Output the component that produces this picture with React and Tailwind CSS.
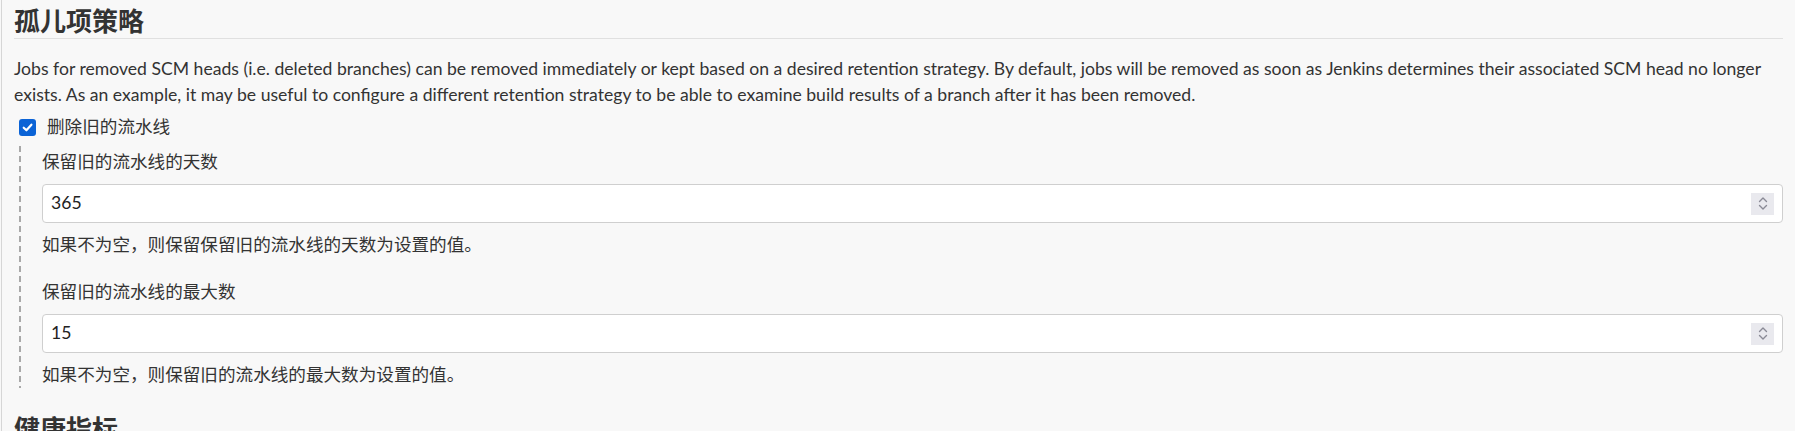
import React from "react";

const font = { fontFamily: '"Lato", "Noto Sans CJK SC", sans-serif' };

function Spinner() {
  return (
    <div className="flex h-[22px] w-[23px] flex-col items-center justify-center bg-[#e9e9ee]">
      <svg width="12" height="17" viewBox="0 0 12 17" fill="none" stroke="#8a8a96" strokeWidth="1.4" strokeLinecap="round" strokeLinejoin="round">
        <path d="M2.5 6.5 L6 3 L9.5 6.5" />
        <path d="M2.5 10.5 L6 14 L9.5 10.5" />
      </svg>
    </div>
  );
}

function NumberField({ label, value, help }) {
  return (
    <div className="flex flex-col">
      <div className="text-[17.6px] leading-[26px] text-[#333]">{label}</div>
      <div className="mt-[9px] flex h-[39px] items-center justify-between rounded-[4px] border border-[#cfcfcf] bg-white pl-[8px] pr-[8px]">
        <span className="text-[17.6px] text-[#222]">{value}</span>
        <Spinner />
      </div>
      <div className="mt-[9px] text-[17.6px] leading-[26px] text-[#333]">{help}</div>
    </div>
  );
}

export default function App() {
  return (
    <div className="h-[431px] w-full overflow-hidden bg-[#f8f8f8]" style={font}>
      <div className="ml-px h-full border-l border-[#d6d6d6] pl-[12px] pr-[12px] pt-[6px]">
        <h2 className="border-b border-[#e0e0e0] pb-[2px] text-[26px] font-bold leading-[30px] text-[#333]">
          孤儿项策略
        </h2>
        <p className="mt-[17px] text-[17.6px] leading-[26px] text-[#333]">
          Jobs for removed SCM heads (i.e. deleted branches) can be removed immediately or kept based on a desired retention strategy. By default, jobs will be removed as soon as Jenkins determines their associated SCM head no longer exists. As an example, it may be useful to configure a different retention strategy to be able to examine build results of a branch after it has been removed.
        </p>
        <div className="mt-[6px] flex h-[26px] items-center">
          <div className="ml-[5px] flex h-[17px] w-[17px] items-center justify-center rounded-[3px] bg-[#0b63d6]">
            <svg width="13" height="13" viewBox="0 0 12 12" fill="none" stroke="white" strokeWidth="2" strokeLinecap="round" strokeLinejoin="round">
              <path d="M2.5 6.2 L5 8.6 L9.6 3.4" />
            </svg>
          </div>
          <span className="ml-[11px] text-[17.6px] text-[#333]">删除旧的流水线</span>
        </div>
        <div className="mt-[6px] flex">
          <div className="ml-[5px] w-[2px] bg-[repeating-linear-gradient(to_bottom,#a8a8a8_0px,#a8a8a8_6px,transparent_6px,transparent_10px)]" />
          <div className="ml-[21px] flex flex-1 flex-col pt-[3px]">
            <NumberField label="保留旧的流水线的天数" value="365" help="如果不为空，则保留保留旧的流水线的天数为设置的值。" />
            <div className="mt-[21px]">
              <NumberField label="保留旧的流水线的最大数" value="15" help="如果不为空，则保留旧的流水线的最大数为设置的值。" />
            </div>
          </div>
        </div>
        <h2 className="mt-[26px] text-[26px] font-bold leading-[30px] text-[#333]">健康指标</h2>
      </div>
    </div>
  );
}
